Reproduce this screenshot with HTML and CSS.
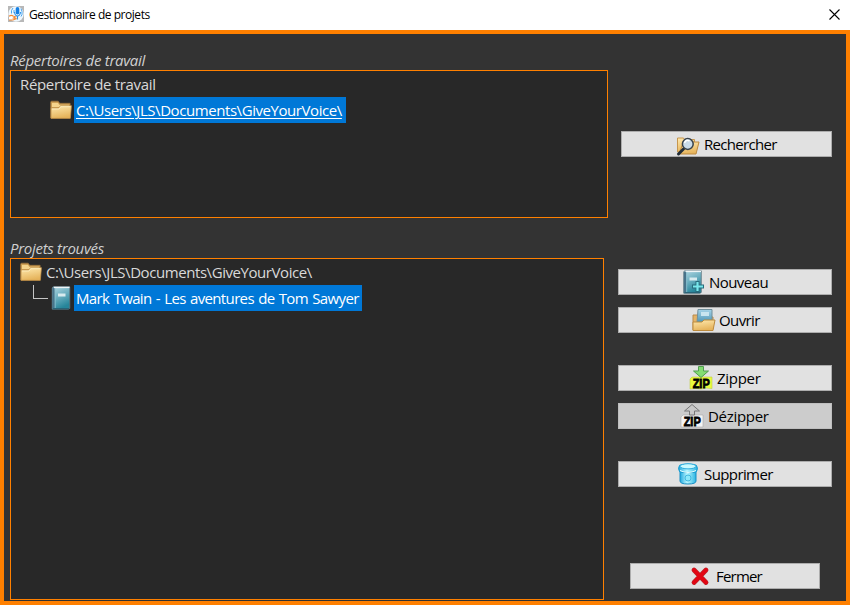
FILE: index.html
```html
<!DOCTYPE html>
<html lang="fr">
<head>
<meta charset="utf-8">
<title>Gestionnaire de projets</title>
<link rel="stylesheet" href="styles.css">
</head>
<body>
<svg class="defs" aria-hidden="true">
  <defs>
    <linearGradient id="gold" x1="0" y1="0" x2="0.3" y2="1"><stop offset="0" stop-color="#ffeab0"/><stop offset="1" stop-color="#e6b45c"/></linearGradient>
    <linearGradient id="teal" x1="0" y1="0" x2="0.4" y2="1"><stop offset="0" stop-color="#b5d9e3"/><stop offset=".5" stop-color="#6db0c1"/><stop offset="1" stop-color="#26859a"/></linearGradient>
    <linearGradient id="cyan" x1="0" x2="1"><stop offset="0" stop-color="#20a9df"/><stop offset=".45" stop-color="#b9f7ff"/><stop offset="1" stop-color="#2ab4e2"/></linearGradient>
    <linearGradient id="blue" x1="0" x2="0" y1="0" y2="1"><stop offset="0" stop-color="#a6d4e8"/><stop offset="1" stop-color="#4c94b4"/></linearGradient>
    <symbol id="folder" viewBox="0 0 22 20">
      <path d="M.7 18V2.2q0-1 1-1h6.5l1.4 2.1h10.5v14.5z" fill="#d0a257" stroke="#9a7138" stroke-width=".8"/>
      <path d="M2 3h6l1.3 2H19v2H2z" fill="#f5d48c"/>
      <path d="M1.1 8h7.6l1.7-2.3h11.1l-1.2 12.7H1z" fill="url(#gold)" stroke="#b98a45" stroke-width=".7"/>
      <path d="M2 9h7l1.8-2.3h9.6" fill="none" stroke="#fff0c3" stroke-width=".8"/>
    </symbol>
    <symbol id="book" viewBox="0 0 20 24">
      <path d="M2 .8h16.8v21.6l-1.5.8H1.2V2z" fill="url(#teal)" stroke="#60757f" stroke-width=".8"/>
      <path d="M1.4 2 3.7 1v21.5H1.4z" fill="#48738a"/><path d="M4.2 1v21" stroke="#8dc1cf" stroke-width=".8"/>
      <path d="M3 1.4h15.5" stroke="#eef5f7" stroke-width="1.4"/>
      <path d="M7 7.5h7.5v3H7z" fill="#d8ebef"/><path d="M2 22.7h16" stroke="#275d70"/>
    </symbol>
  </defs>
</svg>

<header class="titlebar">
  <svg class="app-icon" viewBox="0 0 16 16">
    <path d="M0 0h16v16H0z" fill="#b8b8b8"/><circle cx="8" cy="8" r="7.7" fill="#eef8ff"/>
    <path d="M5 2 3.5 4.5v3M6 4v3M13 2.5l1 3v3l-1 2" stroke="#4ba5ee" stroke-width="1" fill="none"/>
    <rect x="7.7" y="1" width="3.6" height="7.5" rx="1.8" fill="#167fe2"/><path d="M6.5 6q.5 4 3 4t3-4M9.5 10v3.5" fill="none" stroke="#2b90e8" stroke-width="1.1"/>
    <path d="M1 10.2q2.5-1.5 4-.2l2.5.8-2 1.2 2.5.8-3 1.2H1" fill="#fff" stroke="#f58b36" stroke-width="1.2"/>
  </svg>
  <h1 class="title">Gestionnaire de projets</h1>
  <svg class="close" viewBox="0 0 11 11"><path d="M.5.5l10 10M10.5.5l-10 10" stroke="#000" stroke-width="1.1"/></svg>
</header>

<main class="frame">
  <section class="group group-dirs">
    <div class="pane pane-dirs">
      <h2 class="label label-dirs"><span>Répertoires de travail</span></h2>
      <div class="tree">
        <div class="row heading"><span class="head-text">Répertoire de travail</span></div>
        <div class="row child">
          <svg class="folder"><use href="#folder"/></svg>
          <span class="selected path link"><span>C:\Users\JLS\Documents\GiveYourVoice\</span></span>
        </div>
      </div>
    </div>
    <div class="actions actions-dirs">
      <button class="btn search">
        <svg class="icon" viewBox="0 0 24 24">
          <path d="M1.5 20V6h6l1 1.5h10V20z" fill="url(#gold)" stroke="#c6964d"/><path d="m7 11 3-1h13l-3 12H3z" fill="url(#gold)" stroke="#bd8a40"/>
          <path d="m7.5 17-5 5" stroke="#222c36" stroke-width="3" stroke-linecap="round"/><circle cx="11.8" cy="12" r="5.4" fill="#c9dbe9" stroke="#38424b" stroke-width="1.5"/><path d="M8.5 11q1.5-4 5-2" fill="none" stroke="#fff" stroke-width="1.5"/>
        </svg><span>Rechercher</span>
      </button>
    </div>
  </section>

  <section class="group group-projects">
    <div class="pane pane-projects">
      <h2 class="label label-projects"><span>Projets trouvés</span></h2>
      <div class="tree">
        <div class="row root"><svg class="folder"><use href="#folder"/></svg><span class="path root-text">C:\Users\JLS\Documents\GiveYourVoice\</span></div>
        <div class="row project">
          <i class="branch"></i><svg class="book"><use href="#book"/></svg>
          <span class="selected project-name">Mark Twain - Les aventures de Tom Sawyer</span>
        </div>
      </div>
    </div>
    <div class="actions actions-projects">
      <button class="btn new">
        <svg class="icon" viewBox="0 0 24 24"><use href="#book" x="0" y="0" width="21" height="24"/><path d="M15.5 11v11M10 16.5h12" stroke="#286d7d" stroke-width="4"/><path d="M15.5 12v9M11 16.5h10" stroke="#78e7ec" stroke-width="2.2"/></svg><span>Nouveau</span>
      </button>
      <button class="btn open">
        <svg class="icon" viewBox="0 0 24 24"><path d="M1 22V7h6l1 2h13v12z" fill="#e3b369" stroke="#b98a4b"/><path d="M6 1.5h14v13H5z" fill="url(#blue)" stroke="#718f9b"/><path d="M9 4h8v4H9z" fill="#c8e5ef"/><path d="M1 14h9l2-2h11l-2 10.5H1z" fill="url(#gold)" stroke="#bd8b3d"/></svg><span>Ouvrir</span>
      </button>
      <button class="btn zip">
        <svg class="icon" viewBox="0 0 24 24"><path d="M3 11h20v11.5q-6-1-11 .5-6-1-11 0V13z" fill="#e9fb3d" stroke="#c0cf45" stroke-width=".6"/><path d="M9.5.5h5v4.5h5L12 11.5 4.5 5h5z" fill="#83dc72" stroke="#529c50"/><text x="12.2" y="22.3" class="zip-text" textLength="17" lengthAdjust="spacingAndGlyphs">ZIP</text></svg><span>Zipper</span>
      </button>
      <button class="btn unzip">
        <svg class="icon" viewBox="0 0 24 24"><path d="M3 11h20v12H1V13z" fill="#f4f4f4" stroke="#aaa" stroke-width=".6"/><path d="M12 .5 4.5 7h5v4h5V7h5z" fill="#c8c8c8" stroke="#777"/><text x="12.2" y="22.3" class="zip-text" textLength="17" lengthAdjust="spacingAndGlyphs">ZIP</text></svg><span>Dézipper</span>
      </button>
      <button class="btn delete">
        <svg class="icon" viewBox="0 0 24 24"><path d="M4 9v10q0 3 8 3t8-3V9z" fill="url(#cyan)" stroke="#168fc5"/><rect x="2.7" y="2.5" width="18.6" height="8" rx="3.5" fill="url(#cyan)" stroke="#159bd0"/><ellipse cx="12" cy="4.3" rx="8" ry="2.6" fill="#c9faff" stroke="#28aadd"/><path d="M4 8.5q8 4 16 0" fill="none" stroke="#eaffff"/><circle cx="12" cy="16" r="3" fill="#8ce9fb" stroke="#42b8de"/></svg><span>Supprimer</span>
      </button>
      <button class="btn quit">
        <svg class="icon" viewBox="0 0 24 24"><path d="m6 6 12 12.5M18 6 6 18.5" stroke="#b8262b" stroke-width="4.8" stroke-linecap="round"/><path d="m6 6 12 12.5M18 6 6 18.5" stroke="#e30613" stroke-width="3.6" stroke-linecap="round"/></svg><span>Fermer</span>
      </button>
    </div>
  </section>
</main>
</body>
</html>
```
FILE: styles.css
```css
* { box-sizing: border-box; }
body { margin: 0; width: 850px; height: 605px; overflow: hidden; background: #fff; font: 15px/26px "Open Sans", "Noto Sans", sans-serif; }
.defs { position: absolute; width: 0; height: 0; }
svg { display: block; flex: none; }
.titlebar { display: flex; align-items: center; height: 30px; padding: 0 10px 2px 8px; }
.app-icon { width: 16px; height: 16px; }
.title { margin: 2px 0 0 5px; font-size: 12px; font-weight: 400; letter-spacing: -.46px; color: #000; }
.close { width: 11px; height: 11px; margin-left: auto; }

.frame { height: 575px; border: 4px solid #ff8000; background: #333; padding: 18px 14px 0 6px; }
.group { display: flex; justify-content: space-between; }
.group-dirs { height: 188px; }
.pane-dirs { width: 598px; }
.pane-projects { width: 594px; }
.label { height: 18px; margin: 0; font-size: 15px; font-weight: 400; font-style: italic; line-height: 16px; letter-spacing: -.29px; color: #d0d0d0; white-space: nowrap; }
.tree { border: 1px solid #ff8000; background: #282828; padding-left: 9px; color: #d9d9d9; white-space: nowrap; }
.pane-dirs .tree { height: 148px; }
.pane-projects .tree { height: 342px; }
.row { display: flex; align-items: center; height: 26px; }
.head-text { letter-spacing: -.34px; }
.child { padding-left: 29px; }
.folder { width: 24px; height: 20px; }
.root .folder { margin-left: -1px; }
.selected { height: 26px; margin-left: 1px; padding-left: 2px; background: #0078d7; color: #fff; }
.path { letter-spacing: -.43px; }
.link { width: 272px; text-decoration: underline; text-underline-offset: 2px; text-decoration-thickness: 1px; }
.root-text { margin-left: 3px; }
.branch { align-self: flex-start; width: 15px; height: 14px; margin-left: 13px; border-left: 1px solid #c4c4c4; border-bottom: 1px solid #c4c4c4; }
.book { width: 20px; height: 24px; margin-left: 3px; }
.project-name { width: 288px; margin-left: 3px; letter-spacing: -.64px; word-spacing: 1px; }

.actions { display: flex; flex-direction: column; }
.actions-dirs { width: 211px; padding-top: 79px; }
.actions-projects { width: 214px; padding-top: 29px; }
.btn { display: flex; align-items: center; width: 100%; height: 26px; margin: 0 0 12px; padding: 0; border: 1px solid #adadad; background: #e1e1e1; color: #000; font: inherit; line-height: 24px; white-space: nowrap; letter-spacing: -.3px; }
.icon { width: 24px; height: 24px; margin-right: 4px; overflow: visible; }
.search { padding-left: 54px; letter-spacing: -.68px; }
.new { padding-left: 63px; letter-spacing: -.55px; }
.new .icon, .open .icon { margin-right: 3px; }
.open { padding-left: 73px; margin-bottom: 32px; letter-spacing: -.6px; }
.zip { padding-left: 70px; }
.unzip { padding-left: 61px; margin-bottom: 32px; background: #ccc; border-color: #bfbfbf; }
.delete { padding-left: 57px; margin-bottom: 76px; letter-spacing: -.6px; }
.quit { width: 190px; align-self: center; padding-left: 57px; letter-spacing: -.8px; }
.zip-text { font: 900 13px "Liberation Sans", sans-serif; letter-spacing: 0; text-anchor: middle; fill: #000; stroke: #000; stroke-width: .8px; }
```
